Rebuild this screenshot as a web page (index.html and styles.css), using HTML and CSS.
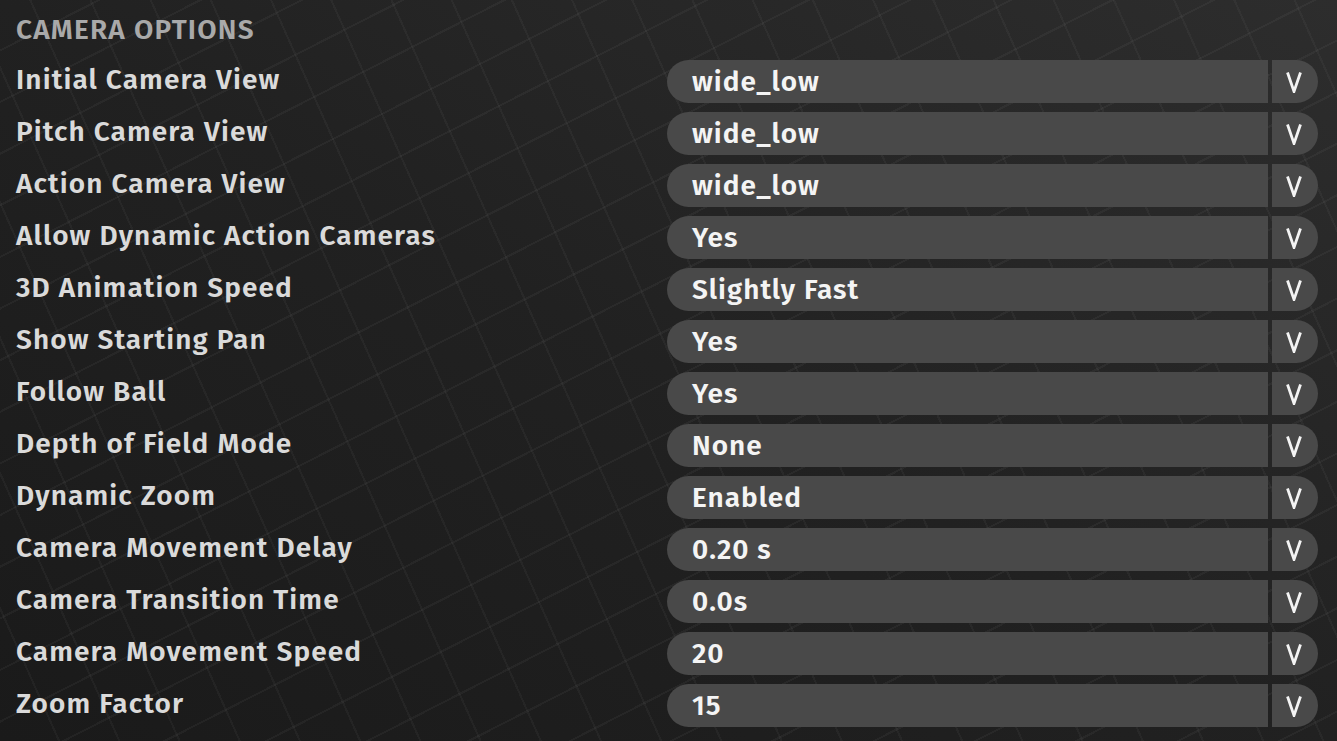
FILE: index.html
```html
<!DOCTYPE html>
<html>
<head>
<meta charset="utf-8">
<link rel="stylesheet" href="styles.css">
</head>
<body>
<div class="panel">
  <div class="title">CAMERA OPTIONS</div>
  <div class="rows">
    <div class="row"><div class="label">Initial Camera View</div><div class="select"><div class="value">wide_low</div><div class="arrow"><svg width="16" height="22" viewBox="0 0 16 22"><polyline points="1.5,1.5 8,20.5 14.5,1.5" fill="none" stroke="#f4f4f4" stroke-width="2.8"/></svg></div></div></div>
    <div class="row"><div class="label">Pitch Camera View</div><div class="select"><div class="value">wide_low</div><div class="arrow"><svg width="16" height="22" viewBox="0 0 16 22"><polyline points="1.5,1.5 8,20.5 14.5,1.5" fill="none" stroke="#f4f4f4" stroke-width="2.8"/></svg></div></div></div>
    <div class="row"><div class="label">Action Camera View</div><div class="select"><div class="value">wide_low</div><div class="arrow"><svg width="16" height="22" viewBox="0 0 16 22"><polyline points="1.5,1.5 8,20.5 14.5,1.5" fill="none" stroke="#f4f4f4" stroke-width="2.8"/></svg></div></div></div>
    <div class="row"><div class="label">Allow Dynamic Action Cameras</div><div class="select"><div class="value">Yes</div><div class="arrow"><svg width="16" height="22" viewBox="0 0 16 22"><polyline points="1.5,1.5 8,20.5 14.5,1.5" fill="none" stroke="#f4f4f4" stroke-width="2.8"/></svg></div></div></div>
    <div class="row"><div class="label">3D Animation Speed</div><div class="select"><div class="value">Slightly Fast</div><div class="arrow"><svg width="16" height="22" viewBox="0 0 16 22"><polyline points="1.5,1.5 8,20.5 14.5,1.5" fill="none" stroke="#f4f4f4" stroke-width="2.8"/></svg></div></div></div>
    <div class="row"><div class="label">Show Starting Pan</div><div class="select"><div class="value">Yes</div><div class="arrow"><svg width="16" height="22" viewBox="0 0 16 22"><polyline points="1.5,1.5 8,20.5 14.5,1.5" fill="none" stroke="#f4f4f4" stroke-width="2.8"/></svg></div></div></div>
    <div class="row"><div class="label">Follow Ball</div><div class="select"><div class="value">Yes</div><div class="arrow"><svg width="16" height="22" viewBox="0 0 16 22"><polyline points="1.5,1.5 8,20.5 14.5,1.5" fill="none" stroke="#f4f4f4" stroke-width="2.8"/></svg></div></div></div>
    <div class="row"><div class="label">Depth of Field Mode</div><div class="select"><div class="value">None</div><div class="arrow"><svg width="16" height="22" viewBox="0 0 16 22"><polyline points="1.5,1.5 8,20.5 14.5,1.5" fill="none" stroke="#f4f4f4" stroke-width="2.8"/></svg></div></div></div>
    <div class="row"><div class="label">Dynamic Zoom</div><div class="select"><div class="value">Enabled</div><div class="arrow"><svg width="16" height="22" viewBox="0 0 16 22"><polyline points="1.5,1.5 8,20.5 14.5,1.5" fill="none" stroke="#f4f4f4" stroke-width="2.8"/></svg></div></div></div>
    <div class="row"><div class="label">Camera Movement Delay</div><div class="select"><div class="value">0.20 s</div><div class="arrow"><svg width="16" height="22" viewBox="0 0 16 22"><polyline points="1.5,1.5 8,20.5 14.5,1.5" fill="none" stroke="#f4f4f4" stroke-width="2.8"/></svg></div></div></div>
    <div class="row"><div class="label">Camera Transition Time</div><div class="select"><div class="value">0.0s</div><div class="arrow"><svg width="16" height="22" viewBox="0 0 16 22"><polyline points="1.5,1.5 8,20.5 14.5,1.5" fill="none" stroke="#f4f4f4" stroke-width="2.8"/></svg></div></div></div>
    <div class="row"><div class="label">Camera Movement Speed</div><div class="select"><div class="value">20</div><div class="arrow"><svg width="16" height="22" viewBox="0 0 16 22"><polyline points="1.5,1.5 8,20.5 14.5,1.5" fill="none" stroke="#f4f4f4" stroke-width="2.8"/></svg></div></div></div>
    <div class="row"><div class="label">Zoom Factor</div><div class="select"><div class="value">15</div><div class="arrow"><svg width="16" height="22" viewBox="0 0 16 22"><polyline points="1.5,1.5 8,20.5 14.5,1.5" fill="none" stroke="#f4f4f4" stroke-width="2.8"/></svg></div></div></div>
  </div>
</div>
</body>
</html>
```
FILE: styles.css
```css
html, body {
  margin: 0;
  padding: 0;
  height: 100%;
}
body {
  font-family: "Fira Sans", "Open Sans", "Noto Sans", sans-serif;
  font-weight: 600;
  background-color: #222;
  background-image:
    repeating-linear-gradient(153deg, transparent 0, transparent 44px, rgba(255,255,255,0.04) 44px, rgba(255,255,255,0.04) 46px),
    repeating-linear-gradient(66deg, transparent 0, transparent 53px, rgba(255,255,255,0.035) 53px, rgba(255,255,255,0.035) 55px),
    linear-gradient(to top right, #1a1a1a 0%, #212121 50%, #2d2d2d 100%);
  overflow: hidden;
}
.panel {
  padding: 0 19px 0 16px;
}
.title {
  color: #a9a9a9;
  font-size: 28px;
  line-height: 30px;
  padding-top: 15px;
  height: 47px;
  box-sizing: border-box;
  letter-spacing: 1.2px;
}
.rows {
  display: flex;
  flex-direction: column;
  gap: 9px;
  padding-top: 13px;
}
.row {
  display: flex;
  align-items: center;
  height: 43px;
}
.label {
  flex: 1;
  color: #dadada;
  font-size: 28px;
  line-height: 30px;
  padding-bottom: 4px;
  letter-spacing: 1.1px;
  white-space: nowrap;
}
.select {
  width: 651px;
  height: 43px;
  display: flex;
  gap: 4px;
}
.value {
  flex: 1;
  background: #494949;
  border-radius: 22px 0 0 22px;
  color: #f4f4f4;
  font-size: 28px;
  line-height: 43px;
  padding-left: 25px;
  letter-spacing: 1px;
  white-space: nowrap;
}
.arrow {
  width: 46px;
  background: #494949;
  border-radius: 0 22px 22px 0;
  display: flex;
  align-items: center;
  justify-content: center;
  padding-right: 2px;
  box-sizing: border-box;
}
.arrow svg {
  display: block;
}
```
